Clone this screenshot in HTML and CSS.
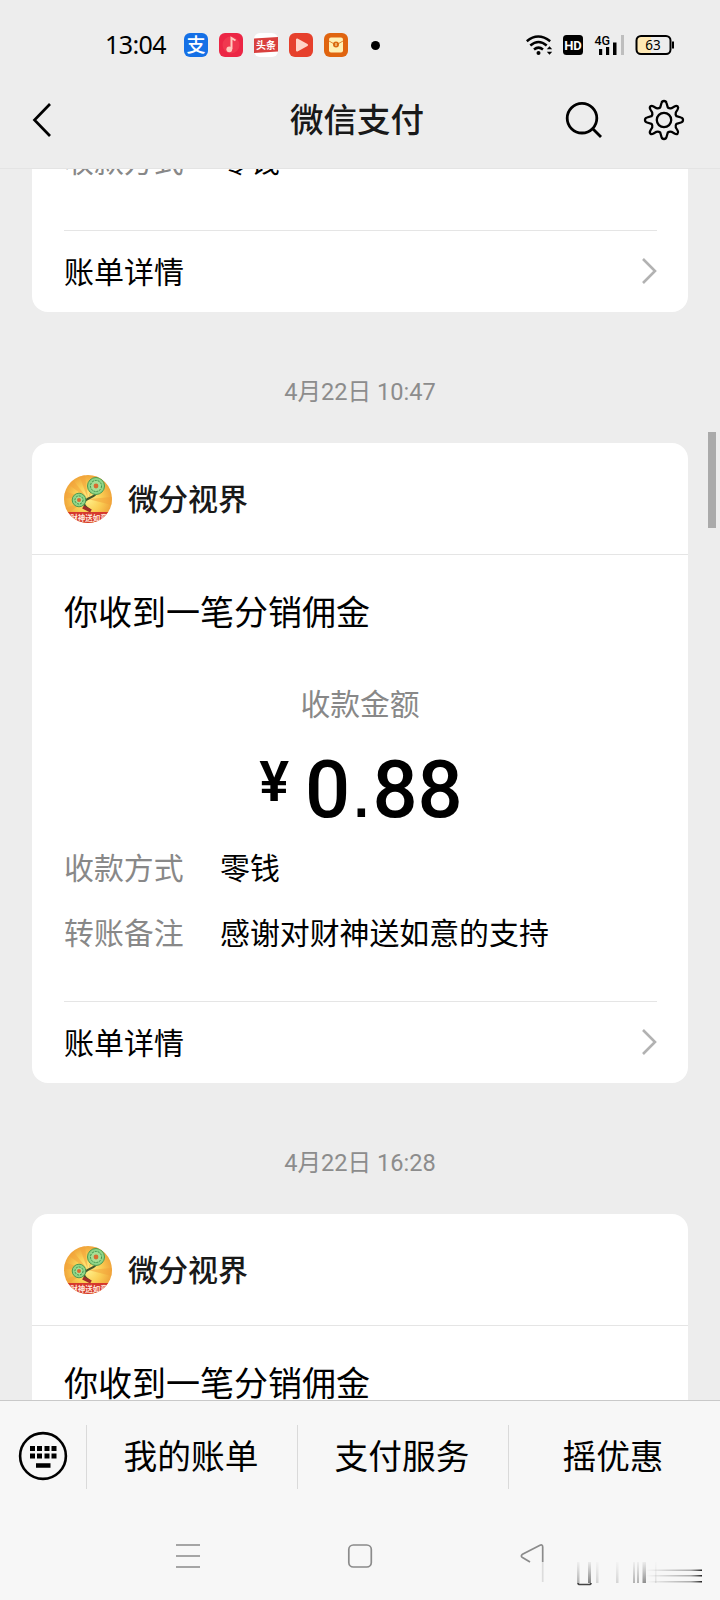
FILE: index.html
```
<!DOCTYPE html>
<html lang="zh-CN">
<head>
<meta charset="utf-8">
<title>微信支付</title>
<link rel="stylesheet" href="styles.css">
</head>
<body>
<svg width="0" height="0" class="defs">
  <defs>
    <radialGradient id="gold"><stop offset="0" stop-color="#fff08a"/><stop offset=".55" stop-color="#fbcf55"/><stop offset="1" stop-color="#f0a53a"/></radialGradient>
    <linearGradient id="fade" x1="0" y1="0" x2="0" y2="1"><stop offset="0" stop-color="#777" stop-opacity="0.1"/><stop offset="1" stop-color="#666" stop-opacity=".8"/></linearGradient>
    <linearGradient id="side" x1="0" y1="0" x2="1" y2="0"><stop offset="0" stop-color="#777" stop-opacity="0"/><stop offset=".8" stop-color="#777" stop-opacity=".6"/><stop offset="1" stop-color="#222"/></linearGradient>
    <clipPath id="disc"><circle cx="24" cy="24" r="24"/></clipPath>
    <symbol id="avatar" viewBox="0 0 48 48">
      <g clip-path="url(#disc)">
        <rect width="48" height="48" fill="url(#gold)"/>
        <path d="M24 24L0 6V0h5zM24 24L15 0h6zM24 24L0 16v7zM24 24L0 34v7zM24 24L48 22v8zM24 24L31 0h7z" fill="#f3a33a" opacity=".55"/>
        <path d="M32 18c-1 5-10 4-12 10 0 4 3 4 6 7" fill="none" stroke="#45562c" stroke-width="2"/>
        <path d="M19 32l8 4" stroke="#a12d28" stroke-width="3.500"/>
        <circle cx="32" cy="11" r="8.5" fill="#8fd487" stroke="#4b9a50"/>
        <circle cx="32" cy="11" r="5.5" fill="#a7df94" stroke="#3d914b" stroke-dasharray="2 1"/>
        <circle cx="32" cy="11" r="2.4" fill="#d86c30"/>
        <circle cx="15" cy="25" r="6.8" fill="#8fd487" stroke="#4b9a50"/>
        <circle cx="15" cy="25" r="4" fill="#a7df94" stroke="#3d914b" stroke-dasharray="2 1"/>
        <circle cx="15" cy="25" r="2" fill="#d86c30"/>
        <rect y="37" width="48" height="11" fill="#d5382e"/>
        <text x="25" y="45.5" text-anchor="middle" class="avatar-text">财神送如意</text>
      </g>
    </symbol>
    <symbol id="arrow" viewBox="0 0 16 28"><path d="M2 2l12 12L2 26" fill="none" stroke="#b2b2b2" stroke-width="2.6"/></symbol>
  </defs>
</svg>
<div class="screen">
  <div class="status">
    <span class="time">13:04</span>
    <div class="apps">
      <svg width="24" height="24" viewBox="0 0 24 24"><rect width="24" height="24" rx="6" fill="#1570e6"/><text x="12" y="19" text-anchor="middle" class="app-zhi">支</text></svg>
      <svg width="24" height="24" viewBox="0 0 24 24"><rect width="24" height="24" rx="6" fill="#ec2645"/><circle cx="12" cy="12" r="8.5" fill="#f0384f"/><path d="M12.500 16V5l4 2.500" fill="none" stroke="#ffc9bd" stroke-width="2"/><circle cx="10.300" cy="16.300" r="2.900" fill="#ffc9bd"/></svg>
      <svg width="24" height="24" viewBox="0 0 24 24"><rect width="24" height="24" rx="6" fill="#fff"/><path d="M0 5.500l24-1.500v14.500L0 20z" fill="#d9403e"/><text x="12" y="16" text-anchor="middle" class="app-tou">头条</text></svg>
      <svg width="24" height="24" viewBox="0 0 24 24"><rect width="24" height="24" rx="6" fill="#e6402c"/><path d="M8 6.500v11l10-5.500z" fill="#ffd5c8" stroke="#ffd5c8" stroke-width="2" stroke-linejoin="round"/></svg>
      <svg width="24" height="24" viewBox="0 0 24 24"><rect width="24" height="24" rx="6" fill="#e0640f"/><rect x="5" y="4.500" width="14" height="15" rx="2" fill="#fff0b5"/><path d="M5 8l7 4 7-4" fill="none" stroke="#e0842f"/><circle cx="12" cy="11.500" r="3" fill="#d9690f"/><path d="M12 10v3" stroke="#fff0b5"/></svg>
    </div>
    <span class="dot"></span>
    <div class="signals">
      <svg width="148" height="24" viewBox="0 0 148 24">
        <g fill="none" stroke="#000" stroke-width="2.500">
          <path d="M.8 8.200Q12 -1.200 24.200 8.200M4.300 12.500Q12.500 5.500 20.700 12.500M8 16.500Q12.500 12.800 17 16.500"/>
        </g>
        <circle cx="12.500" cy="20" r="2" />
        <path d="M20.800 16.300L23.500 13.200l2.700 3.100zM20.800 18.700l2.700 3.100 2.700-3.100z"/>
        <rect x="37" y="2" width="20" height="20" rx="3.500"/>
        <text x="47" y="16.500" text-anchor="middle" class="hd">HD</text>
        <text x="68.500" y="12" class="four-g">4G</text>
        <path d="M73 16h3.200v6H73zM80 14h3.200v8H80zM87 9.500h3.500V22H87z"/><path d="M95 2h3v20h-3z" fill="#bebebe"/>
        <path d="M115 3h10v18h-10a4 4 0 0 1-4-4V7a4 4 0 0 1 4-4z" fill="#ffe9b5"/>
        <rect x="110.500" y="3" width="34" height="18" rx="4.500" fill="none" stroke="#000" stroke-width="2"/>
        <rect x="146" y="8.500" width="2" height="7"/>
        <text x="127" y="17" text-anchor="middle" class="battery">63</text>
      </svg>
    </div>
  </div>
  <header class="top">
    <svg class="back" width="20" height="36" viewBox="0 0 20 36"><path d="M19 2L3.500 18 19 34" fill="none" stroke="#000" stroke-width="2.700"/></svg>
    <h1>微信支付</h1>
    <div class="actions">
      <svg width="40" height="40" viewBox="0 0 40 40" fill="none" stroke="#000" stroke-width="2.800"><circle cx="18" cy="18.200" r="14.800"/><path d="M28.500 28.500l8.500 8.500"/></svg>
      <svg width="42" height="42" viewBox="-21 -21 42 42" fill="none" stroke="#000" stroke-width="2.300" stroke-linejoin="round"><circle r="7.200"/><path d="M-2.500 -17Q-2 -19 0 -19T2.500 -17L3.800 -12.500Q5.500 -11.200 7.500 -11.800L10.500 -13.600Q12.500 -14.700 13.600 -13.600T13.600 -10.500L11.800 -7.500Q11.200 -5.500 12.500 -3.800L17 -2.500Q19 -2 19 0T17 2.500L12.500 3.800Q11.200 5.500 11.800 7.500L13.600 10.500Q14.700 12.500 13.600 13.600T10.500 13.600L7.500 11.800Q5.500 11.200 3.800 12.500L2.500 17Q2 19 0 19T-2.500 17L-3.800 12.500Q-5.500 11.200 -7.500 11.800L-10.500 13.600Q-12.500 14.700 -13.600 13.600T-13.600 10.500L-11.800 7.500Q-11.200 5.500 -12.500 3.800L-17 2.500Q-19 2 -19 0T-17 -2.500L-12.500 -3.800Q-11.200 -5.500 -11.800 -7.500L-13.600 -10.500Q-14.700 -12.500 -13.600 -13.600T-10.500 -13.600L-7.500 -11.800Q-5.500 -11.200 -3.800 -12.500Z"/></svg>
    </div>
  </header>
  <main class="chat">
    <article class="card first">
      <div class="row"><span class="key">收款方式</span><span>零钱</span></div>
      <div class="detail"><span>账单详情</span><svg width="16" height="28"><use href="#arrow"/></svg></div>
    </article>
    <time class="stamp">4月22日 10:47</time>
    <article class="card">
      <div class="brand"><svg width="48" height="48"><use href="#avatar"/></svg><b>微分视界</b></div>
      <h2>你收到一笔分销佣金</h2>
      <div class="label">收款金额</div>
      <div class="amount"><span class="yen">¥</span><span>0<span class="point">.</span>88</span></div>
      <div class="row"><span class="key">收款方式</span><span>零钱</span></div>
      <div class="row"><span class="key">转账备注</span><span>感谢对财神送如意的支持</span></div>
      <div class="detail"><span>账单详情</span><svg width="16" height="28"><use href="#arrow"/></svg></div>
    </article>
    <time class="stamp">4月22日 16:28</time>
    <article class="card">
      <div class="brand"><svg width="48" height="48"><use href="#avatar"/></svg><b>微分视界</b></div>
      <h2>你收到一笔分销佣金</h2>
    </article>
    <i class="scrollbar"></i>
  </main>
  <footer class="menu">
    <div class="keyboard"><svg width="50" height="50" viewBox="0 0 50 50"><circle cx="25" cy="25" r="22.900" fill="none" stroke="#000" stroke-width="2.600"/><path d="M12 15h5v5h-5zM19 15h5v5h-5zM26.500 15h5v5h-5zM33.500 15h5v5h-5zM12 22.500h5v5h-5zM19 22.500h5v5h-5zM26.500 22.500h5v5h-5zM33.500 22.500h5v5h-5zM18 32.300h14.500v4.500H18z"/></svg></div>
    <div class="tab">我的账单</div>
    <div class="tab">支付服务</div>
    <div class="tab">摇优惠</div>
  </footer>
  <nav class="system">
    <svg width="720" height="88" viewBox="0 0 720 88" fill="none" stroke="#8b8b8b" stroke-width="1.700">
      <path d="M176 33h24M176 44h24M176 55h24"/>
      <rect x="348.800" y="33" width="22.500" height="22" rx="4.500"/>
      <path d="M530 50L522.500 45.500Q520.200 44 522.500 42.300L540 33.200Q542.700 32.200 542.700 35V50"/>
      <g stroke="none" fill="url(#fade)">
        <rect x="577" y="50" width="2.500" height="21" opacity=".6"/>
        <rect x="588" y="50" width="3" height="21"/>
        <rect x="596" y="50" width="2.500" height="21" opacity=".3"/>
        <rect x="616" y="50" width="2.500" height="21" opacity=".3"/>
        <rect x="633" y="50" width="2" height="21" opacity=".6"/>
        <rect x="637" y="50" width="2" height="21" opacity=".6"/>
        <rect x="642.500" y="50" width="3.500" height="21" opacity=".9"/>
        <rect x="655" y="50" width="1.500" height="21" opacity=".2"/>
      </g>
      <path d="M542.700 50v20" stroke-opacity=".25"/>
      <path d="M578 71q0 1.500 2 1.500h9q2 0 2-1.500" stroke="#444"/>
      <g stroke="none" fill="url(#side)">
        <rect x="646" y="57.500" width="56" height="1.500"/><rect x="646" y="63" width="56" height="1.500"/><rect x="646" y="69" width="56" height="1.500"/>
      </g>
    </svg>
  </nav>
</div>
</body>
</html>
```
FILE: styles.css
```
* { box-sizing: border-box; margin: 0; }
body { background: #ededed; }
svg { display: block; flex: none; }
.defs { position: absolute; }
.screen {
  width: 720px; height: 1600px; overflow: hidden;
  display: flex; flex-direction: column;
  background: #ededed; color: #000;
  font: 30px/40px Roboto, "Noto Sans CJK SC", sans-serif;
}
.status { height: 80px; padding: 10px 46px 0 105px; display: flex; align-items: center; flex: none; }
.time { width: 79px; padding-bottom: 2px; font: 25px/30px "Noto Sans", sans-serif; letter-spacing: -0.6px; }
.apps { display: flex; gap: 11px; }
.dot { width: 9px; height: 9px; border-radius: 50%; background: #000; margin-left: 23px; }
.signals { margin-left: auto; }
.app-zhi { font: 500 19px "Noto Sans CJK SC", sans-serif; fill: #fff; }
.app-tou { font: bold 10px "Noto Sans CJK SC", sans-serif; fill: #fff; }
.hd { font: bold 13px Roboto, sans-serif; fill: #fff; }
.four-g { font: 500 12.5px Roboto, sans-serif; }
.battery { font: 13.5px "Noto Sans", sans-serif; }
.avatar-text { font: bold 7.5px "Noto Sans CJK SC", sans-serif; fill: #ffe9dc; }

.top {
  height: 89px; padding: 0 35px 9px 31px; flex: none;
  display: grid; grid-template-columns: 1fr auto 1fr; align-items: center;
  border-bottom: 1px solid #e4e4e4;
}
.top h1 { font-size: 33.5px; font-weight: 500; line-height: 40px; padding: 2px 2px 0 0; color: #191919; }
.actions { display: flex; align-items: center; justify-content: flex-end; gap: 39px; }

.chat { position: relative; height: 1231px; flex: none; overflow: hidden; padding: 0 32px; }
.card { height: 640px; background: #fff; border-radius: 16px; overflow: hidden; display: flex; flex-direction: column; }
.card.first { height: 143px; border-radius: 0 0 16px 16px; }
.first .row { margin-top: -40px; }
.stamp { display: flex; height: 131px; padding-top: 28px; align-items: center; justify-content: center; font-size: 23.6px; color: #8c8c8c; }
.brand { height: 112px; flex: none; padding: 0 32px; display: flex; align-items: center; gap: 16px; border-bottom: 1px solid #e5e5e5; }
.brand b { font-weight: 500; color: #191919; padding-top: 2px; }
h2 { font-size: 34px; font-weight: 400; line-height: 48px; padding: 34px 32px 0; }
.label { text-align: center; margin-top: 48px; font-size: 29.8px; color: #888; }
.amount { display: flex; justify-content: center; gap: 16px; margin-top: 25px; padding-left: 2px; height: 80px; font: 500 79.5px/80px Roboto, sans-serif; }
.yen { font-size: 56px; font-weight: 600; line-height: 65px; }
.point { font-family: "Liberation Sans", sans-serif; font-weight: 400; line-height: 1; }
.row { height: 65px; flex: none; display: flex; align-items: center; padding: 0 32px; font-size: 29.9px; }
.amount + .row { margin-top: 6px; }
.key { width: 156px; color: #888; }
.detail { height: 82px; flex: none; margin: auto 31px 0 32px; border-top: 1px solid #e5e5e5; display: flex; align-items: center; justify-content: space-between; }
.detail span { padding-top: 2px; }
.detail svg { margin-bottom: 1px; }
.scrollbar { position: absolute; right: 4px; top: 263px; width: 8px; height: 96px; background: #aaa; }

.menu { height: 112px; flex: none; background: #f7f7f7; border-top: 1px solid #c9c9c9; display: flex; align-items: center; }
.keyboard { width: 86px; padding: 0 0 2px 18px; }
.tab { width: 211px; height: 64px; padding-right: 2px; border-left: 1px solid #dadada; font-size: 33.7px; line-height: 66px; text-align: center; }
.system { height: 88px; flex: none; background: #f7f7f7; }
```
